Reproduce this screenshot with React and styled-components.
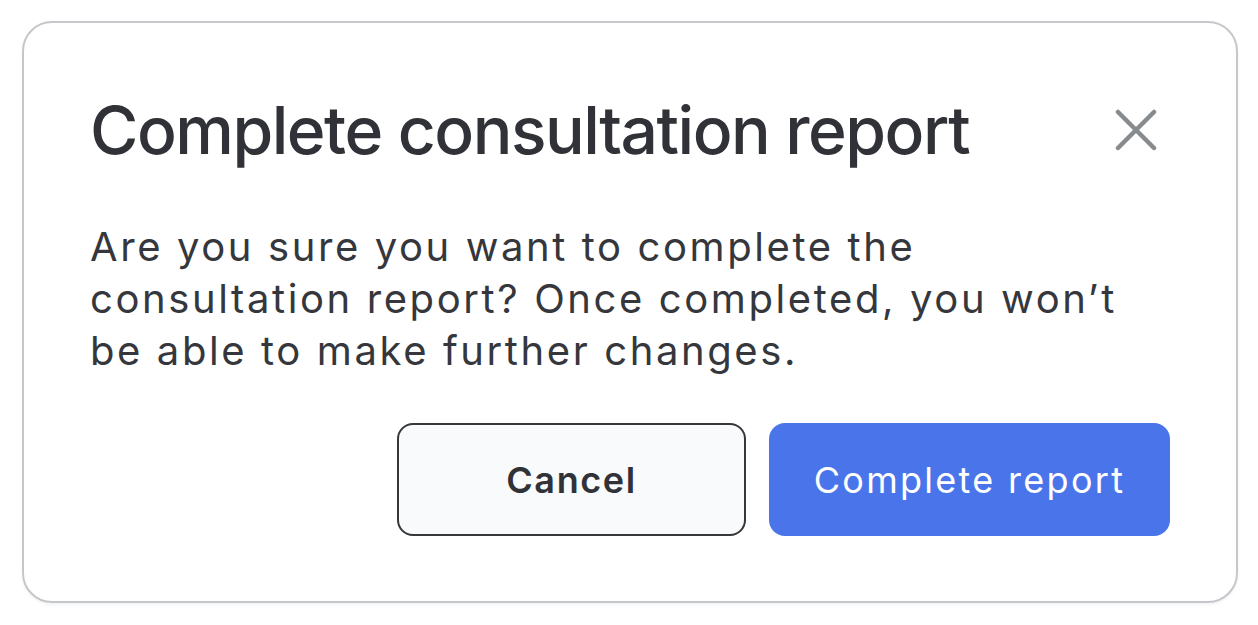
import React from 'react'
import styled, {createGlobalStyle} from 'styled-components'

const GlobalStyle = createGlobalStyle`
  html, body {
    margin: 0;
    padding: 0;
    background: #ffffff;
  }
  body {
    font-family: Inter, "Noto Sans", sans-serif;
  }
`

const Page = styled.div`
  padding: 21px 21px 22px 22px;
`

const Card = styled.div`
  box-sizing: border-box;
  width: 1216px;
  height: 582px;
  border: 2px solid #c6c7cb;
  border-radius: 30px;
  background: #fff;
  box-shadow: 0 2px 3px rgba(20, 30, 60, 0.05);
  padding: 67px 66px 65px 66px;
  display: flex;
  flex-direction: column;
`

const Header = styled.div`
  display: flex;
  align-items: center;
  justify-content: space-between;
`

const Title = styled.h2`
  margin: 0;
  font-family: Inter, "Noto Sans", sans-serif;
  font-weight: 500;
  font-size: 66px;
  line-height: 80px;
  letter-spacing: -1.5px;
  color: #303237;
`

const CloseButton = styled.button`
  border: none;
  background: none;
  padding: 0;
  margin-right: 12px;
  width: 44px;
  height: 44px;
  display: flex;
  align-items: center;
  justify-content: center;
  cursor: pointer;
`

const Message = styled.p`
  margin: 51px 0 0 0;
  width: 1060px;
  font-size: 40px;
  line-height: 52px;
  letter-spacing: 2.6px;
  color: #35373c;
`

const Actions = styled.div`
  margin-top: auto;
  display: flex;
  justify-content: flex-end;
  gap: 23px;
`

const Button = styled.button`
  box-sizing: border-box;
  height: 113px;
  width: ${p => p.w}px;
  border-radius: 16px;
  font-family: Inter, "Noto Sans", sans-serif;
  font-size: 36px;
  cursor: pointer;
  ${p => p.primary ? `
    background: #4a75ea;
    border: none;
    color: #ffffff;
    font-weight: 400;
    letter-spacing: 2.3px;
  ` : `
    background: #f9fafc;
    border: 2px solid #35373b;
    color: #303237;
    font-weight: 600;
    letter-spacing: 1.6px;
  `}
`

const CloseIcon = () => (
  <svg width="42" height="42" viewBox="0 0 42 42">
    <path d="M3 3 L39 39 M39 3 L3 39" stroke="#878b8e" strokeWidth="4.5" strokeLinecap="round" fill="none" />
  </svg>
)

export default function App() {
  return (
    <Page>
      <GlobalStyle />
      <Card>
        <Header>
          <Title>Complete consultation report</Title>
          <CloseButton aria-label="Close"><CloseIcon /></CloseButton>
        </Header>
        <Message>
          Are you sure you want to complete the consultation report? Once completed, you won’t be able to make further changes.
        </Message>
        <Actions>
          <Button w={349}>Cancel</Button>
          <Button primary w={401}>Complete report</Button>
        </Actions>
      </Card>
    </Page>
  )
}
